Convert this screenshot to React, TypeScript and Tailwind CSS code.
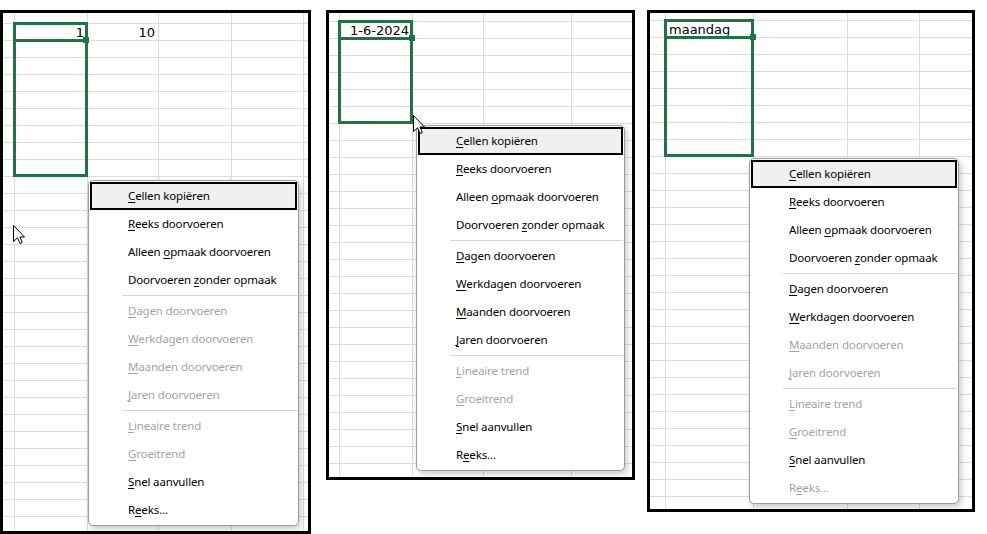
import React from "react";

type Item = { label: string; u: number };

const items: (Item | null)[] = [
  { label: "Cellen kopiëren", u: 0 },
  { label: "Reeks doorvoeren", u: 0 },
  { label: "Alleen opmaak doorvoeren", u: 7 },
  { label: "Doorvoeren zonder opmaak", u: 11 },
  null,
  { label: "Dagen doorvoeren", u: 0 },
  { label: "Werkdagen doorvoeren", u: 0 },
  { label: "Maanden doorvoeren", u: 0 },
  { label: "Jaren doorvoeren", u: 0 },
  null,
  { label: "Lineaire trend", u: 0 },
  { label: "Groeitrend", u: 0 },
  { label: "Snel aanvullen", u: 0 },
  { label: "Reeks...", u: 1 },
];

type Panel = {
  box: string;
  cols: string[];
  topRow: string;
  cells: Record<string, { text: string; right?: boolean }>;
  sel: string;
  handle: string;
  menu: string;
  disabled: string[];
  cursor?: string;
};

const panels: Panel[] = [
  {
    box: "w-[311px] h-[524px]",
    cols: ["w-[12px]", "w-[73px]", "w-[71px]", "w-[73px]", "w-[72px]"],
    topRow: "h-[11px]",
    cells: { "1-1": { text: "1", right: true }, "1-2": { text: "10", right: true } },
    sel: "left-[10px] top-[9px] w-[75px] h-[155px]",
    handle: "left-[80px] top-[24px]",
    menu: "left-[85px] top-[167px] w-[211px]",
    disabled: ["Dagen doorvoeren", "Werkdagen doorvoeren", "Maanden doorvoeren", "Jaren doorvoeren", "Lineaire trend", "Groeitrend"],
    cursor: "left-[10px] top-[212px]",
  },
  {
    box: "w-[309px] h-[470px] ml-[15px]",
    cols: ["w-[11px]", "w-[73px]", "w-[71px]", "w-[88px]"],
    topRow: "h-[9px]",
    cells: { "1-1": { text: "1-6-2024", right: true } },
    sel: "left-[9px] top-[7px] w-[75px] h-[104px]",
    handle: "left-[80px] top-[22px]",
    menu: "left-[87px] top-[112px] w-[209px]",
    disabled: ["Lineaire trend", "Groeitrend"],
    cursor: "left-[84px] top-[102px]",
  },
  {
    box: "w-[328px] h-[502px] ml-[12px]",
    cols: ["w-[16px]", "w-[88px]", "w-[94px]", "w-[72px]"],
    topRow: "h-[8px]",
    cells: { "1-1": { text: "maandag" } },
    sel: "left-[14px] top-[6px] w-[90px] h-[138px]",
    handle: "left-[100px] top-[21px]",
    menu: "left-[99px] top-[145px] w-[210px]",
    disabled: ["Maanden doorvoeren", "Jaren doorvoeren", "Lineaire trend", "Groeitrend", "Reeks..."],
  },
];

function Cursor({ pos }: { pos: string }) {
  return (
    <svg className={`absolute ${pos}`} width="13" height="20" viewBox="0 0 13 20">
      <path d="M0.5 0.5V16.5L4.5 12.8L7 18.5L9.3 17.5L6.9 12H11.5Z" fill="white" stroke="black" strokeLinejoin="round" />
    </svg>
  );
}

function Menu({ pos, disabled }: { pos: string; disabled: string[] }) {
  return (
    <div
      className={`absolute ${pos} bg-white border border-[#9c9c9c] rounded-[5px] p-px shadow-[2px_3px_6px_rgba(0,0,0,0.22)] font-['Noto_Sans',sans-serif] text-[11.5px] tracking-[-0.15px]`}
    >
      {items.map((it, i) =>
        it === null ? (
          <div key={i} className="h-px my-px ml-[32px] bg-[#d5d5d5]" />
        ) : (
          <div
            key={i}
            className={`flex items-center h-[28px] pl-[36px] border-2 whitespace-nowrap ${
              i === 0 ? "border-black bg-[#f0f0f0]" : "border-transparent"
            } ${disabled.includes(it.label) ? "text-[#a3a3a3]" : "text-black"}`}
          >
            <span className="whitespace-pre">
              {it.label.slice(0, it.u)}
              <span className="underline underline-offset-2">{it.label[it.u]}</span>
              {it.label.slice(it.u + 1)}
            </span>
          </div>
        )
      )}
    </div>
  );
}

function Sheet({ p }: { p: Panel }) {
  return (
    <div className={`relative shrink-0 border-[3px] border-black overflow-hidden bg-white ${p.box}`}>
      {/* grid */}
      <div className="flex flex-col">
        {Array.from({ length: 32 }).map((_, r) => (
          <div key={r} className={`flex shrink-0 border-b border-[#dcdcdc] ${r === 0 ? p.topRow : "h-[17px]"}`}>
            {p.cols.map((w, c) => {
              const cell = p.cells[`${r}-${c}`];
              return (
                <div
                  key={c}
                  className={`${w} shrink-0 border-r border-[#dcdcdc] px-[3px] pt-px flex items-center overflow-visible whitespace-nowrap font-['DejaVu_Sans',sans-serif] text-[13px] text-black ${
                    cell?.right ? "justify-end" : "justify-start"
                  }`}
                >
                  {cell?.text}
                </div>
              );
            })}
            <div className="flex-1" />
          </div>
        ))}
      </div>

      {/* selection */}
      <div className={`absolute ${p.sel} border-[3px] border-[#217346]`}>
        <div className="absolute left-0 right-0 top-[14px] h-[3px] bg-[#217346]" />
      </div>
      <div className={`absolute ${p.handle} w-[6px] h-[6px] bg-[#217346]`} />

      <Menu pos={p.menu} disabled={p.disabled} />
      {p.cursor && <Cursor pos={p.cursor} />}
    </div>
  );
}

export default function App() {
  return (
    <div className="w-[987px] h-[534px] bg-white flex items-start pt-[10px] overflow-hidden">
      {panels.map((p, i) => (
        <Sheet key={i} p={p} />
      ))}
    </div>
  );
}
